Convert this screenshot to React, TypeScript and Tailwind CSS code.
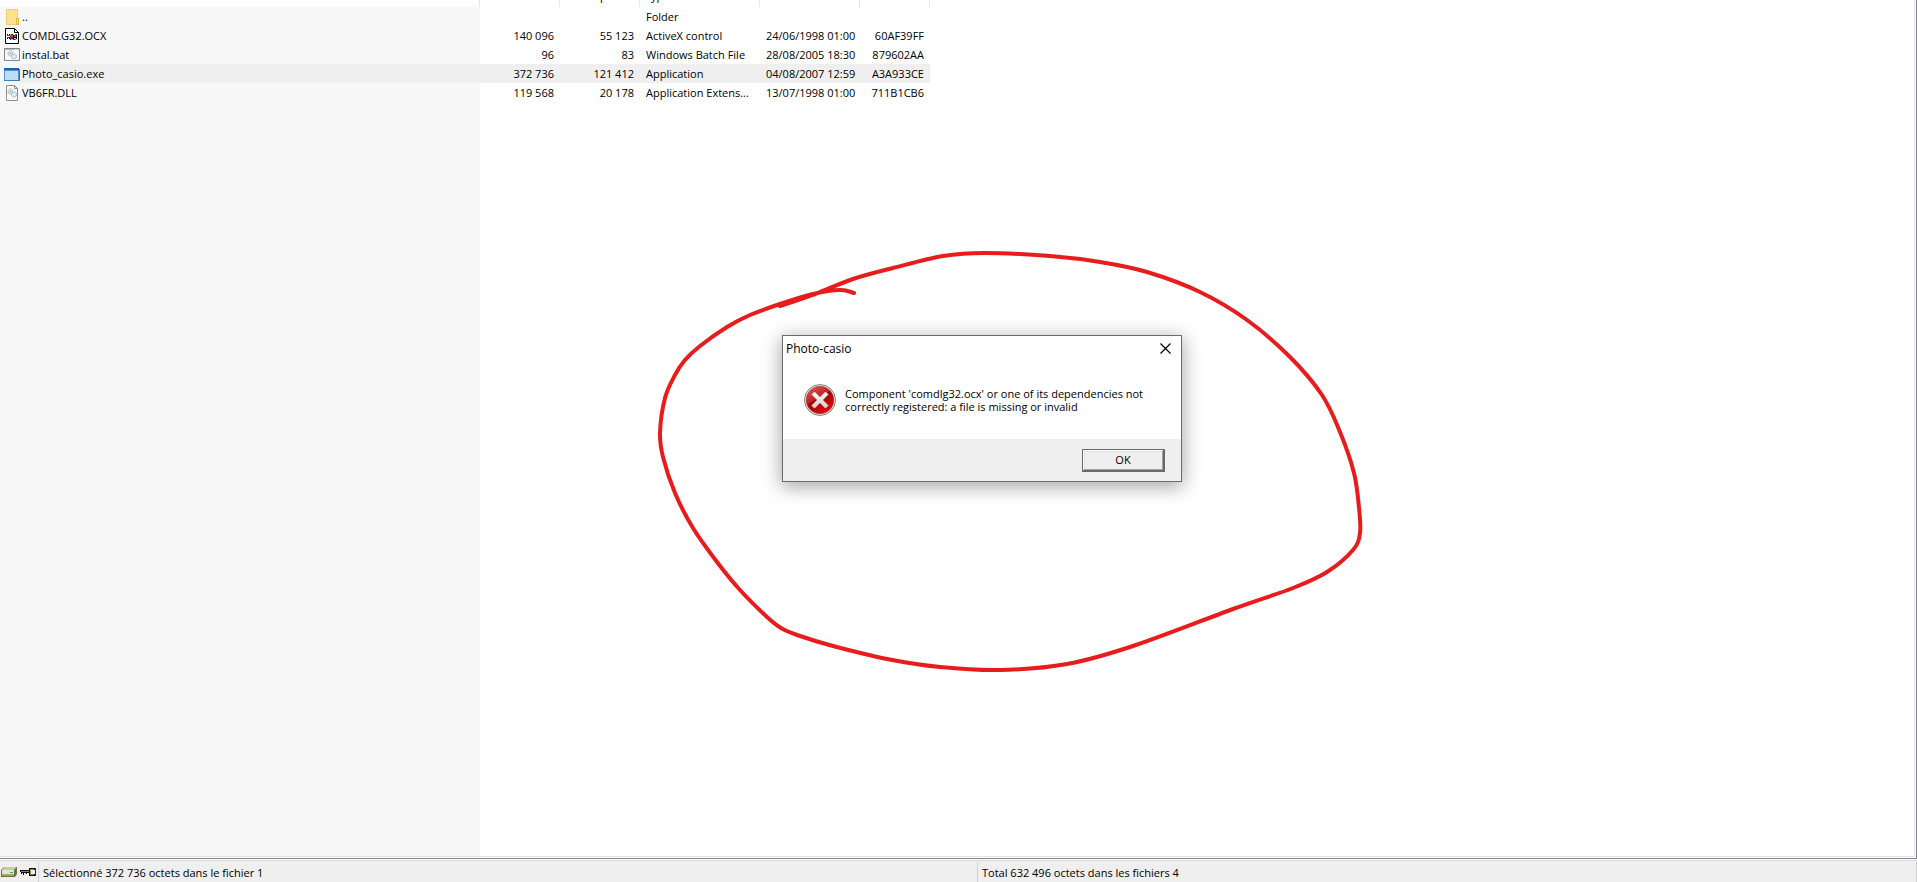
import type { ReactNode } from "react";

type ArchiveEntry = {
  name: string;
  icon: ReactNode;
  size?: string;
  packed?: string;
  type: string;
  modified?: string;
  crc?: string;
  selected?: boolean;
};

const FolderIcon = () => (
  <svg width="16" height="18" viewBox="0 0 16 18" aria-hidden="true">
    <path d="M2.5 1.5h11v9h1v6h-12z" fill="#fde18e" stroke="#efcf6b" />
    <path d="M12.5 10.5h2v6h-2z" fill="#fbd978" stroke="#e2b844" />
  </svg>
);

const OcxIcon = () => (
  <svg width="16" height="18" viewBox="0 0 16 18" aria-hidden="true">
    <path d="M1.5 1.5h9l4 4v11h-13z" fill="#fff" stroke="#000" />
    <path d="M10.5 1.5v4h4z" fill="#fff" stroke="#000" />
    <path d="M3 7h1v1H3zM5 7h1v1H5zM3 11h1v1H3zM5 11h1v1H5z" fill="#000" />
    <path d="M3 8h3v1H3z" fill="#d02020" />
    <path d="M3 10h3v1H3z" fill="#2030c0" />
    <path d="M6 8l2-1 2 1 3-1v5l-3 1-2-1-2 1z" fill="#000" />
    <path d="M6 8h3v2H6z" fill="#f02020" />
    <path d="M10 8h2v2h-2z" fill="#208040" />
    <path d="M6 10h3v2H6z" fill="#2030f0" />
    <path d="M10 11h2v1h-2z" fill="#e0d020" />
  </svg>
);

const Gears = () => (
  <>
    <circle cx="6.5" cy="7.5" r="2.5" fill="#e8e8e8" stroke="#9aa0a4" strokeDasharray="1.5 .7" />
    <circle cx="6.5" cy="7.5" r=".8" fill="#8c9296" />
    <circle cx="10" cy="10.5" r="2.5" fill="#d3eaf6" stroke="#86b4cc" strokeDasharray="1.5 .7" />
    <circle cx="10" cy="10.5" r=".8" fill="#fff" />
  </>
);

const BatchIcon = () => (
  <svg width="16" height="18" viewBox="0 0 16 18" aria-hidden="true">
    <path d="M.5 2.5h15v12H.5z" fill="#f8f8f8" stroke="#85888b" />
    <path d="M1 3h14v1H1z" fill="#b4b7ba" />
    <path d="M11 3h1v1h-1zM13 3h1v1h-1z" fill="#fff" />
    <Gears />
  </svg>
);

const AppIcon = () => (
  <svg width="16" height="18" viewBox="0 0 16 18" aria-hidden="true">
    <path d="M0 3h15v13H0z" fill="#4f93cf" />
    <path d="M0 3h15v2H0z" fill="#1565b0" />
    <path d="M1 6h13v9H1z" fill="#bfdcf3" />
    <path d="M15 4h1v12h-1z" fill="#2f6ea8" />
    <path d="M0 15h16v1H0z" fill="#3f80bc" />
  </svg>
);

const DllIcon = () => (
  <svg width="16" height="18" viewBox="0 0 16 18" aria-hidden="true">
    <path d="M2.5 1.5h8l3 3v12h-11z" fill="#fafafa" stroke="#8c8f92" />
    <path d="M10.5 1.5v3h3" fill="none" stroke="#8c8f92" />
    <Gears />
  </svg>
);

const ErrorIcon = () => (
  <svg width="32" height="32" viewBox="0 0 32 32" role="img" aria-label="Error">
    <defs>
      <linearGradient id="error-red" x1="0" y1="0" x2=".6" y2="1">
        <stop offset="0" stopColor="#e2605c" />
        <stop offset=".5" stopColor="#c02020" />
        <stop offset=".51" stopColor="#9c0a0a" />
        <stop offset="1" stopColor="#e00808" />
      </linearGradient>
      <linearGradient id="error-cross" x1="0" y1="0" x2="0" y2="1">
        <stop offset="0" stopColor="#ffffff" />
        <stop offset="1" stopColor="#cfcfcf" />
      </linearGradient>
    </defs>
    <circle cx="16" cy="16" r="15.5" fill="#e6e6e6" stroke="#858585" />
    <circle cx="16" cy="16" r="13.8" fill="url(#error-red)" stroke="#a83a3a" strokeWidth=".6" />
    <path
      d="M8 10.5l2.5-2.500 5.500 5.500 5.500-5.500 2.500 2.500-5.500 5.500 5.500 5.500-2.500 2.500-5.500-5.500-5.500 5.500-2.500-2.500 5.500-5.500z"
      fill="url(#error-cross)"
      stroke="#eeeeee"
      strokeWidth=".8"
      strokeLinejoin="round"
    />
  </svg>
);

const DriveIcon = () => (
  <svg width="16" height="12" viewBox="0 0 16 12" aria-hidden="true">
    <path d="M3 1h13v7l-2 3H0V4z" fill="#6f6f3c" />
    <path d="M3.5 1h12L13 4H1z" fill="#c9cba0" />
    <path d="M1 4h12v5H1z" fill="#e4e5d2" />
    <path d="M1 8h12v2H1z" fill="#a3a670" />
    <path d="M9 6h3v1H9z" fill="#18b078" />
  </svg>
);

const KeyIcon = () => (
  <svg width="16" height="12" viewBox="0 0 16 12" aria-hidden="true">
    <path d="M0 4h9V2h6v8H9V7H7v1H6V7H4v2H3V7H2v1H1V6H0z" fill="#111108" />
    <path d="M1 5h8v1H1z" fill="#86863a" />
    <path d="M10 3h4v6h-4z" fill="#8d8d4a" />
    <path d="M11 4h4v4h-4z" fill="#efefef" />
    <path d="M15 2h1v8h-1z" fill="#2b2b10" />
  </svg>
);

const entries: ArchiveEntry[] = [
  { name: "..", icon: <FolderIcon />, type: "Folder" },
  {
    name: "COMDLG32.OCX",
    icon: <OcxIcon />,
    size: "140 096",
    packed: "55 123",
    type: "ActiveX control",
    modified: "24/06/1998 01:00",
    crc: "60AF39FF",
  },
  {
    name: "instal.bat",
    icon: <BatchIcon />,
    size: "96",
    packed: "83",
    type: "Windows Batch File",
    modified: "28/08/2005 18:30",
    crc: "879602AA",
  },
  {
    name: "Photo_casio.exe",
    icon: <AppIcon />,
    size: "372 736",
    packed: "121 412",
    type: "Application",
    modified: "04/08/2007 12:59",
    crc: "A3A933CE",
    selected: true,
  },
  {
    name: "VB6FR.DLL",
    icon: <DllIcon />,
    size: "119 568",
    packed: "20 178",
    type: "Application Extens...",
    modified: "13/07/1998 01:00",
    crc: "711B1CB6",
  },
];

const penPoints = [
  [780, 306], [815, 294], [853, 279], [893, 268], [943, 256], [985, 253],
  [1050, 256], [1100, 262], [1147, 272], [1200, 292], [1247, 320], [1290, 357],
  [1322, 395], [1340, 432], [1354, 473], [1359, 508], [1360, 533], [1353, 550],
  [1327, 572], [1293, 588], [1233, 609], [1133, 646], [1067, 664], [1000, 670],
  [940, 667], [887, 659], [833, 646], [797, 635], [781, 628], [767, 617],
  [740, 590], [717, 562], [693, 528], [675, 493], [663, 457], [660, 433],
  [665, 398], [675, 375], [685, 360], [700, 346], [727, 327], [750, 315],
  [780, 304], [813, 294], [840, 290], [854, 293],
];

// Catmull-Rom through the pen points, written out as cubic beziers
const smoothPath = (points: number[][]) =>
  points.slice(1).reduce((path, [x, y], i) => {
    const before = points[i - 1] ?? points[i];
    const from = points[i];
    const after = points[i + 2] ?? [x, y];
    const c1 = [from[0] + (x - before[0]) / 6, from[1] + (y - before[1]) / 6];
    const c2 = [x - (after[0] - from[0]) / 6, y - (after[1] - from[1]) / 6];
    return `${path} C${c1.join(" ")} ${c2.join(" ")} ${x} ${y}`;
  }, `M${points[0].join(" ")}`);

const HeaderCell = ({ label, children }: { label: string; children?: ReactNode }) => (
  <th aria-label={label} className="border-r border-[#e5e5e5] p-0 font-normal">
    {children}
  </th>
);

const FileTable = () => (
  <table className="h-full w-[930px] table-fixed border-separate border-spacing-0 text-left whitespace-nowrap">
    <colgroup>
      <col className="w-[480px]" />
      <col className="w-[80px]" />
      <col className="w-[80px]" />
      <col className="w-[120px]" />
      <col className="w-[100px]" />
      <col className="w-[70px]" />
    </colgroup>
    <thead>
      <tr className="h-[7px]">
        <HeaderCell label="Nom" />
        <HeaderCell label="Taille" />
        <HeaderCell label="Compressé">
          <div className="flex h-[7px] items-end justify-end overflow-hidden px-[5px] pb-0.5">
            Compressé
          </div>
        </HeaderCell>
        <HeaderCell label="Type">
          <div className="flex h-[7px] items-end overflow-hidden px-[5px] pb-0.5">Type</div>
        </HeaderCell>
        <HeaderCell label="Modifié" />
        <HeaderCell label="CRC32" />
      </tr>
    </thead>
    <tbody>
      {entries.map((entry) => (
        <tr key={entry.name} className={`h-[19px] ${entry.selected ? "bg-[#efefef]" : ""}`}>
          <td className="bg-[#f7f7f7] p-0 pl-1">
            <div className="flex h-[19px] items-center">
              {entry.icon}
              <span className={`flex-1 pl-0.5 ${entry.selected ? "bg-[#efefef]" : ""}`}>
                {entry.name}
              </span>
            </div>
          </td>
          <td className="p-0 pr-1.5 text-right">{entry.size}</td>
          <td className="p-0 pr-1.5 text-right">{entry.packed}</td>
          <td className="p-0 pl-1.5">{entry.type}</td>
          <td className="p-0 pl-1.5">{entry.modified}</td>
          <td className="p-0 pr-1.5 text-right">{entry.crc}</td>
        </tr>
      ))}
      <tr aria-hidden="true">
        <td className="bg-[#f7f7f7]" />
      </tr>
    </tbody>
  </table>
);

const ErrorDialog = () => (
  <section
    role="alertdialog"
    aria-labelledby="dialog-title"
    aria-describedby="dialog-message"
    className="absolute top-[335px] left-[782px] w-[400px] border border-[#6b6b6b] bg-white shadow-[0_4px_18px_1px_rgba(0,0,0,0.35)]"
  >
    <header className="flex h-6 items-center justify-between pr-2.5 pl-[3px]">
      <h1 id="dialog-title" className="text-[12px]">
        Photo-casio
      </h1>
      <button type="button" aria-label="Close">
        <svg width="11" height="11" viewBox="0 0 11 11" stroke="#000" aria-hidden="true">
          <path d="M.5.5l10 10M10.5.5l-10 10" strokeWidth="1.2" />
        </svg>
      </button>
    </header>
    <div className="flex h-[79px] gap-[9px] pt-6 pl-[21px]">
      <ErrorIcon />
      <p id="dialog-message" className="pt-[3px] leading-[13px]">
        Component 'comdlg32.ocx' or one of its dependencies not
        <br />
        correctly registered: a file is missing or invalid
      </p>
    </div>
    <footer className="flex h-[42px] items-center justify-end bg-[#efefef] pr-4">
      <button
        type="button"
        className="h-[23px] w-[83px] border border-r-2 border-b-2 border-[#696969] bg-[#efefef] leading-[19px] shadow-[inset_1px_1px_0_#fff,inset_-1px_-1px_0_#a0a0a0,inset_2px_2px_0_#e3e3e3]"
      >
        OK
      </button>
    </footer>
  </section>
);

const StatusBar = () => (
  <footer className="flex h-[21px] bg-[#efefef] pt-px">
    <div className="flex w-[39px] items-center gap-[3px] border-r border-[#d0d0d0] pl-px">
      <DriveIcon />
      <KeyIcon />
    </div>
    <p className="flex flex-1 items-center border-r border-[#d0d0d0] pl-1">
      Sélectionné 372 736 octets dans le fichier 1
    </p>
    <p className="flex flex-1 items-center border-r border-[#d0d0d0] pl-1">
      Total 632 496 octets dans les fichiers 4
    </p>
  </footer>
);

const App = () => {
  return (
    <div className="relative flex h-screen flex-col overflow-hidden bg-white font-['Open_Sans','Noto_Sans',sans-serif] text-[11px] leading-[19px] text-black">
      <div className="min-h-0 flex-1 border-r border-b border-[#82828c] pr-px pb-px">
        <main className="h-full border-r border-b border-[#e3e3e8]">
          <FileTable />
        </main>
      </div>
      <div className="h-0.5 border-b border-[#d8d8d8]" />
      <StatusBar />

      <svg
        className="pointer-events-none absolute top-0 left-0"
        width="1400"
        height="700"
        viewBox="0 0 1400 700"
        aria-hidden="true"
      >
        <path
          d={smoothPath(penPoints)}
          fill="none"
          stroke="#e81c1c"
          strokeWidth="4"
          strokeLinecap="round"
          strokeLinejoin="round"
        />
      </svg>
      <ErrorDialog />
    </div>
  );
};

export default App;
